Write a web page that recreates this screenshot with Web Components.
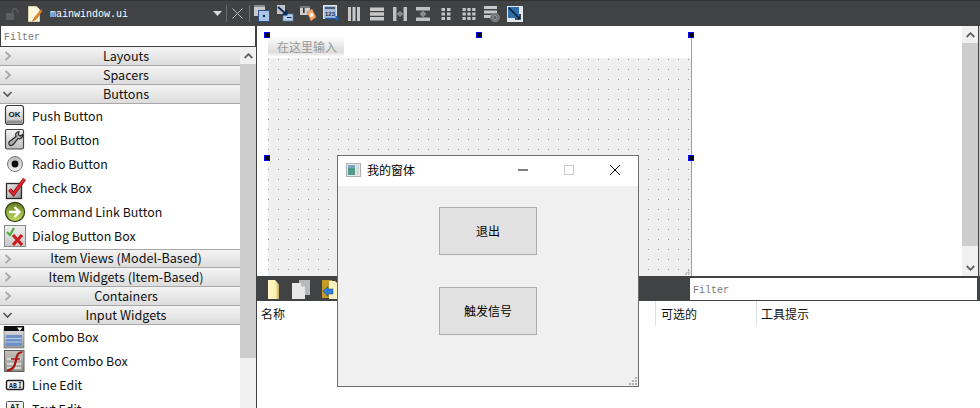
<!DOCTYPE html>
<html>
<head>
<meta charset="utf-8">
<title>mainwindow.ui</title>
<style>
    html, body { margin: 0; padding: 0; background: #fff; overflow: hidden; }
</style>
</head>
<body>
<ds-shell>
    <ds-toolbar slot="top">
        <ds-icon name="lock" style="--w:12px;margin:0 10px 0 6px"></ds-icon>
        <ds-icon name="file" style="--w:14px"></ds-icon>
        <span style="font:10px 'Liberation Mono',monospace;color:#fff;margin:1px 0 0 8px;width:163px">mainwindow.ui</span>
        <ds-icon name="caret" style="--w:9px;margin-right:4px"></ds-icon>
        <ds-sep></ds-sep>
        <ds-icon name="close" style="--w:11px;margin:0 6px 0 5px"></ds-icon>
        <ds-sep></ds-sep>
        <ds-icon name="widgetEdit" class="t" style="margin-left:4px"></ds-icon>
        <ds-icon name="signalEdit" class="t"></ds-icon>
        <ds-icon name="buddyEdit" class="t"></ds-icon>
        <ds-icon name="tabEdit" class="t"></ds-icon>
        <ds-icon name="hlayout" class="t"></ds-icon>
        <ds-icon name="vlayout" class="t"></ds-icon>
        <ds-icon name="hsplit" class="t"></ds-icon>
        <ds-icon name="vsplit" class="t"></ds-icon>
        <ds-icon name="flayout" class="t"></ds-icon>
        <ds-icon name="glayout" class="t"></ds-icon>
        <ds-icon name="breakLayout" class="t"></ds-icon>
        <ds-icon name="adjustSize" class="t"></ds-icon>
    </ds-toolbar>

    <ds-widgetbox slot="left">
        <ds-cat>Layouts</ds-cat>
        <ds-cat>Spacers</ds-cat>
        <ds-cat open>Buttons</ds-cat>
        <ds-item icon="pushBtn">Push Button</ds-item>
        <ds-item icon="toolBtn">Tool Button</ds-item>
        <ds-item icon="radio">Radio Button</ds-item>
        <ds-item icon="check">Check Box</ds-item>
        <ds-item icon="cmdLink">Command Link Button</ds-item>
        <ds-item icon="dlgBox">Dialog Button Box</ds-item>
        <ds-cat lined>Item Views (Model-Based)</ds-cat>
        <ds-cat>Item Widgets (Item-Based)</ds-cat>
        <ds-cat>Containers</ds-cat>
        <ds-cat open>Input Widgets</ds-cat>
        <ds-item icon="combo">Combo Box</ds-item>
        <ds-item icon="fontCombo">Font Combo Box</ds-item>
        <ds-item icon="lineEdit">Line Edit</ds-item>
        <ds-item icon="textEdit">Text Edit</ds-item>
    </ds-widgetbox>

    <ds-canvas slot="canvas"></ds-canvas>
    <ds-actions slot="bottom"></ds-actions>
</ds-shell>
<ds-window title="我的窗体">
    <ds-button>退出</ds-button>
    <ds-button>触发信号</ds-button>
</ds-window>

<script>
const ICONS = {
    lock: `<svg viewBox="0 0 12 14"><path d="M6.500 6V3.800a2.600 2.600 0 0 1 5 0V6" fill="none" stroke="#5a5c5e" stroke-width="1.500"/><rect x="0" y="6" width="8" height="7" fill="#5c5e60"/></svg>`,
    file: `<svg viewBox="0 0 14 16"><path d="M.5.500h8l3 3v12H.5z" fill="#fbf6dc" stroke="#d8d2b0"/><path d="M13.500 3 6.500 11.500 4.500 15l3.500-1.500 6-8z" fill="#e08a2c" stroke="#a85a12" stroke-width=".5"/></svg>`,
    caret: `<svg viewBox="0 0 9 5"><path d="M0 0h9L4.500 5z" fill="#d8d8d8"/></svg>`,
    close: `<svg viewBox="0 0 11 11"><path d="M.5.500l10 10M10.500.500l-10 10" stroke="#b8b8b8" stroke-width="1" fill="none"/></svg>`,
    widgetEdit: `<svg viewBox="0 0 16 17"><rect x="0" y="0" width="11" height="11" fill="#c9c9c9"/><rect x="0" y="0" width="11" height="2" fill="#8a8a8a"/><rect x="4.500" y="5.500" width="11" height="11" fill="#a9c6e8" stroke="#2a4f8a"/><rect x="9" y="10" width="2" height="2" fill="#123"/></svg>`,
    signalEdit: `<svg viewBox="0 0 16 17"><rect x="0" y="0" width="8" height="9" fill="#c4c4c4"/><rect x="6" y="9" width="10" height="7" fill="#b6cde8" stroke="#5a7fae" stroke-width=".7"/><path d="M1 2l8 7M9.500 5v4.500H5.500" stroke="#0b2a5a" stroke-width="1.800" fill="none"/><path d="M10 12.500h4.500" stroke="#123" stroke-width="1"/></svg>`,
    buddyEdit: `<svg viewBox="0 0 16 17"><rect x="0" y="1" width="10" height="9" fill="#cfcfcf"/><rect x="0" y="1" width="10" height="2" fill="#777"/><rect x="3" y="3" width="1.600" height="5" fill="#333"/><path d="M7 7l5-3 4 8-5 4z" fill="#f4a868" stroke="#d8703a" stroke-width=".6"/><circle cx="11.500" cy="10" r="2" fill="#fff3e0"/></svg>`,
    tabEdit: `<svg viewBox="0 0 16 17"><rect x=".5" y=".5" width="13" height="13" fill="#a8bfdc" stroke="#dfe6ee"/><rect x="2" y="2" width="10" height="2" fill="#4a5a78"/><text x="2" y="10.500" font-family="Liberation Sans" font-size="6" font-weight="700" fill="#17325e">123</text><path d="M2 13.500h13M12.500 11l3 2.500-3 2.500" stroke="#1c5fb0" stroke-width="1.300" fill="none"/></svg>`,
    hlayout: `<svg viewBox="0 0 16 16"><g fill="#c8c8c8"><rect x="2" y="1" width="3" height="14"/><rect x="6.500" y="1" width="3" height="14"/><rect x="11" y="1" width="3" height="14"/></g></svg>`,
    vlayout: `<svg viewBox="0 0 16 16"><g fill="#c8c8c8"><rect x="1" y="1.500" width="14" height="3.500"/><rect x="1" y="6.250" width="14" height="3.500"/><rect x="1" y="11" width="14" height="3.500"/></g></svg>`,
    hsplit: `<svg viewBox="0 0 16 16"><g fill="#c0c0c0"><rect x="1" y="1" width="3.500" height="14"/><rect x="11.500" y="1" width="3.500" height="14"/></g><path d="M4.500 8 8 5l3.500 3L8 11z" fill="#8a8a8a"/></svg>`,
    vsplit: `<svg viewBox="0 0 16 16"><g fill="#c0c0c0"><rect x="1" y="1" width="14" height="3.500"/><rect x="1" y="11.500" width="14" height="3.500"/></g><path d="M8 4.500l3.500 3.500L8 11.500 4.500 8z" fill="#8a8a8a"/></svg>`,
    flayout: `<svg viewBox="0 0 16 16"><g fill="#c4c4c4"><rect x="3.500" y="2" width="3.500" height="3"/><rect x="9" y="2" width="3.500" height="3"/><rect x="3.500" y="6.500" width="3.500" height="3"/><rect x="9" y="6.500" width="3.500" height="3"/><rect x="3.500" y="11" width="3.500" height="3"/><rect x="9" y="11" width="3.500" height="3"/></g></svg>`,
    glayout: `<svg viewBox="0 0 16 16"><g fill="#c4c4c4"><rect x="1.500" y="2" width="3.300" height="3"/><rect x="6.300" y="2" width="3.300" height="3"/><rect x="11.200" y="2" width="3.300" height="3"/><rect x="1.500" y="6.500" width="3.300" height="3"/><rect x="6.300" y="6.500" width="3.300" height="3"/><rect x="11.200" y="6.500" width="3.300" height="3"/><rect x="1.500" y="11" width="3.300" height="3"/><rect x="6.300" y="11" width="3.300" height="3"/><rect x="11.200" y="11" width="3.300" height="3"/></g></svg>`,
    breakLayout: `<svg viewBox="0 0 16 16"><g fill="#c8c8c8"><rect x="0" y="0" width="13" height="3"/><rect x="0" y="4.500" width="13" height="3"/><rect x="0" y="9" width="8" height="3"/></g><circle cx="11" cy="11.500" r="4.300" fill="#6e6e6e" stroke="#8a8a8a"/><circle cx="11" cy="11.500" r="2" fill="#5a5a5a" stroke="#999"/></svg>`,
    adjustSize: `<svg viewBox="0 0 16 16"><rect x="0" y="0" width="16" height="16" fill="#dfe6ee"/><rect x="1" y="1" width="11" height="11" fill="#2e6ea8"/><path d="M2 2l11 11M13 8v5H8" stroke="#0c1c30" stroke-width="1.600" fill="none"/></svg>`,

    pushBtn: `<svg viewBox="0 0 22 22"><defs><linearGradient id="g" x2="0" y2="1"><stop offset="0" stop-color="#fff"/><stop offset="1" stop-color="#bbb"/></linearGradient></defs><rect x="1.500" y=".5" width="18" height="19" rx="2.500" fill="url(#g)" stroke="#3c3c3c" stroke-width="1.200"/><rect x="3" y="15.500" width="15" height="3" fill="#8e8e8e"/><text x="10.500" y="11.500" text-anchor="middle" font-family="Liberation Sans" font-size="8" font-weight="700" fill="#111">OK</text></svg>`,
    toolBtn: `<svg viewBox="0 0 22 22"><defs><linearGradient id="g" x2="0" y2="1"><stop offset="0" stop-color="#f4f4f4"/><stop offset="1" stop-color="#bdbdbd"/></linearGradient></defs><rect x="1.500" y=".5" width="18" height="19.500" rx="1.500" fill="url(#g)" stroke="#444" stroke-width="1.200"/><path d="M15 2.500c-3 .5-4 2.500-3 5l-6.500 5c-1.500 1.500-.5 4.500 2 4 1.500-.5 2-1.500 3-2.500l3.500-4.500c2.500 1 5-1 4.500-4l-2 1.500-2-1z" fill="#b0b0b0" stroke="#2a2a2a" stroke-width="1.200"/></svg>`,
    radio: `<svg viewBox="0 0 22 22"><defs><linearGradient id="g" x2="0" y2="1"><stop offset="0" stop-color="#b8b8b8"/><stop offset="1" stop-color="#f4f4f4"/></linearGradient></defs><circle cx="11" cy="11" r="7.500" fill="url(#g)" stroke="#7a7a7a"/><circle cx="11" cy="11" r="3.400" fill="#0c0c0c"/></svg>`,
    check: `<svg viewBox="0 0 22 22"><defs><linearGradient id="g" x1="0" y1="0" x2="1" y2="1"><stop offset="0" stop-color="#f0f0f0"/><stop offset="1" stop-color="#8e8e8e"/></linearGradient></defs><rect x="2.500" y="6.500" width="15" height="15" fill="url(#g)" stroke="#2a2a2a" stroke-width="1.300"/><path d="M5.500 12.500l4 4.500 11-15" fill="none" stroke="#8e1016" stroke-width="3.800"/><path d="M5.500 12.500l4 4.500 11-15" fill="none" stroke="#e0262e" stroke-width="2.200"/></svg>`,
    cmdLink: `<svg viewBox="0 0 22 22"><defs><linearGradient id="g" x2="0" y2="1"><stop offset="0" stop-color="#5f7f1c"/><stop offset="1" stop-color="#c6dc66"/></linearGradient></defs><circle cx="11" cy="11" r="9.600" fill="url(#g)" stroke="#333d18" stroke-width="1.200"/><path d="M5 11h10M10.500 6l5 5-5 5" fill="none" stroke="#fff" stroke-width="2.300"/></svg>`,
    dlgBox: `<svg viewBox="0 0 22 22"><defs><linearGradient id="g" x2="0" y2="1"><stop offset="0" stop-color="#efefef"/><stop offset="1" stop-color="#c8c8c8"/></linearGradient></defs><rect x=".5" y=".5" width="21" height="21" fill="url(#g)" stroke="#8a8a8a"/><path d="M3 7l3 3 4-7" fill="none" stroke="#4caf3a" stroke-width="2.200"/><path d="M9 10l9 10M18 10l-9 10" stroke="#c81e1e" stroke-width="3.200"/></svg>`,
    combo: `<svg viewBox="0 0 22 22"><defs><linearGradient id="g" x2="0" y2="1"><stop offset="0" stop-color="#e4e4e4"/><stop offset="1" stop-color="#9a9a9a"/></linearGradient></defs><rect x="0" y="1" width="20" height="21" fill="url(#g)" stroke="#666" stroke-width=".6"/><rect x="0" y="0" width="20" height="5" fill="#0e0e0e"/><path d="M13 1.500h5.500L15.750 5z" fill="#fff"/><rect x="2" y="9" width="16" height="11" fill="#6d92c8"/><path d="M2 12.500h16M2 16h16" stroke="#c8d4e4" stroke-width=".9"/></svg>`,
    fontCombo: `<svg viewBox="0 0 22 22"><defs><linearGradient id="g" x2="0" y2="1"><stop offset="0" stop-color="#c4c4bc"/><stop offset="1" stop-color="#8e8e88"/></linearGradient></defs><rect x=".5" y=".5" width="19.500" height="21" fill="url(#g)" stroke="#5e5e5e"/><path d="M3 9h14M3 14h14M3 18h14" stroke="#d8d8d2" stroke-width="2.500"/><path d="M18.500 2c-4.500 0-5.500 3-6.500 8S10 20 3 20.500" fill="none" stroke="#a81414" stroke-width="2.200"/><path d="M7 9h9" stroke="#a81414" stroke-width="1.500"/></svg>`,
    lineEdit: `<svg viewBox="0 0 22 22"><rect x="2.500" y="6.500" width="17" height="9" rx="1.500" fill="#f4f4f4" stroke="#1c1c1c" stroke-width="1.400"/><text x="9" y="13.800" text-anchor="middle" font-family="Liberation Mono" font-size="6.500" font-weight="700" fill="#111">AB</text><path d="M16 8.500v5M14.700 8.500h2.600M14.700 13.500h2.600" stroke="#111" stroke-width=".8"/></svg>`,
    textEdit: `<svg viewBox="0 0 22 22"><rect x="2.500" y="3.500" width="17" height="18" rx="1" fill="#f4f4f4" stroke="#555"/><text x="11" y="11" text-anchor="middle" font-family="Liberation Mono" font-size="8" font-weight="700" fill="#222">AI</text></svg>`,

    newForm: `<svg viewBox="0 0 12 19"><defs><linearGradient id="g" x1="0" x2="1"><stop offset="0" stop-color="#fff8c8"/><stop offset=".7" stop-color="#fdf0b0"/><stop offset="1" stop-color="#bca860"/></linearGradient></defs><path d="M1 0h7l4 4.500V19H1z" fill="url(#g)"/></svg>`,
    copyDoc: `<svg viewBox="0 0 18 19"><path d="M7 0h11v15H7z" fill="#b8b8b8"/><path d="M0 3h9l4 3.500V19H0z" fill="#e8e8e8"/><path d="M9 3l4 3.500H9z" fill="#bbb"/></svg>`,
    openDoc: `<svg viewBox="0 0 16 19"><path d="M0 0h10v18H0z" fill="#c49a28"/><path d="M7 1h6l3 3v15H7z" fill="#fbf0c0"/><path d="M1 11l5-4.500V9h5v5H6v2.500z" fill="#2f7fd8" stroke="#134a8c" stroke-width=".5"/></svg>`
};

class DsIcon extends HTMLElement {
    constructor() {
        super();
        this.attachShadow({ mode: "open" });
    }
    connectedCallback() {
        this.shadowRoot.innerHTML = `
            <style>
                :host { display: block; flex: none; width: var(--w, 16px); }
                :host(.t) { width: 16px; margin-right: 7px; }
                svg { display: block; width: 100%; height: auto; overflow: visible; }
            </style>
            ${ICONS[this.getAttribute("name")] || ""}
        `;
    }
}

class DsSep extends HTMLElement {
    constructor() {
        super();
        this.attachShadow({ mode: "open" }).innerHTML = `
            <style>:host { display: block; flex: none; width: 1px; height: 17px; background: #6a6c6e; }</style>
        `;
    }
}

class DsShell extends HTMLElement {
    constructor() {
        super();
        this.attachShadow({ mode: "open" }).innerHTML = `
            <style>
                :host {
                    display: grid;
                    grid-template-columns: 256px 724px;
                    grid-template-rows: 26px 382px;
                    width: 980px;
                    height: 408px;
                    overflow: hidden;
                    background: #404244;
                }
                .top { grid-column: 1 / 3; }
                .left { min-height: 0; overflow: hidden; }
                .right {
                    display: grid;
                    grid-template-rows: 250px 132px;
                    padding-left: 1px;
                    min-height: 0;
                    overflow: hidden;
                }
            </style>
            <div class="top"><slot name="top"></slot></div>
            <div class="left"><slot name="left"></slot></div>
            <div class="right"><slot name="canvas"></slot><slot name="bottom"></slot></div>
        `;
    }
}

class DsToolbar extends HTMLElement {
    constructor() {
        super();
        this.attachShadow({ mode: "open" }).innerHTML = `
            <style>
                :host {
                    display: flex;
                    align-items: center;
                    height: 26px;
                    box-sizing: border-box;
                    border-top: 1px solid #333;
                    background: #404244;
                }
            </style>
            <slot></slot>
        `;
    }
}

class DsFilter extends HTMLElement {
    constructor() {
        super();
        this.attachShadow({ mode: "open" }).innerHTML = `
            <style>
                :host {
                    display: block;
                    box-sizing: border-box;
                    height: var(--h, 20px);
                    padding: 2px 0 0 3px;
                    overflow: hidden;
                    background: #fff;
                    color: #777;
                    font: 10px/calc(var(--h, 20px) - 1px) "Liberation Mono", monospace;
                }
            </style>
            Filter
        `;
    }
}

class DsScrollbar extends HTMLElement {
    constructor() {
        super();
        this.attachShadow({ mode: "open" }).innerHTML = `
            <style>
                :host {
                    display: flex;
                    flex-direction: column;
                    flex: none;
                    width: 16px;
                    background: #f0f0f0;
                }
                .arrow { height: 17px; flex: none; display: flex; align-items: center; justify-content: center; }
                .thumb { flex: none; height: var(--thumb, 200px); background: #cdcdcd; }
                .fill { flex: 1; }
                svg { width: 9px; height: 6px; display: block; }
            </style>
            <div class="arrow"><svg viewBox="0 0 9 6"><path d="M.7 5 4.500 1.200 8.300 5" fill="none" stroke="#606060" stroke-width="1.800"/></svg></div>
            <div class="thumb"></div>
            <div class="fill"></div>
            <div class="arrow"><svg viewBox="0 0 9 6"><path d="M.7 1 4.500 4.800 8.300 1" fill="none" stroke="#606060" stroke-width="1.800"/></svg></div>
        `;
    }
}

class DsWidgetbox extends HTMLElement {
    constructor() {
        super();
        this.attachShadow({ mode: "open" }).innerHTML = `
            <style>
                :host { display: flex; flex-direction: column; height: 382px; }
                ds-filter { flex: none; border-left: 1px solid #404244; border-right: 1px solid #404244; }
                .rule { flex: none; height: 1px; background: #404244; }
                .body { flex: none; height: 420px; display: flex; background: #fff; }
                .list { flex: 1; min-width: 0; overflow: hidden; }
            </style>
            <ds-filter></ds-filter>
            <div class="rule"></div>
            <div class="body">
                <div class="list"><slot></slot></div>
                <ds-scrollbar style="--thumb:294px"></ds-scrollbar>
            </div>
        `;
    }
}

class DsCat extends HTMLElement {
    constructor() {
        super();
        const open = this.hasAttribute("open");
        this.attachShadow({ mode: "open" }).innerHTML = `
            <style>
                :host {
                    display: flex;
                    align-items: center;
                    height: 19px;
                    box-sizing: border-box;
                    border-bottom: 1px solid #a8a8a8;
                    background: linear-gradient(#f4f4f4, #dcdcdc);
                    color: #111;
                    font: 12.6px/18px "Noto Sans CJK SC", sans-serif;
                }
                :host([lined]) { margin-top: 1px; border-top: 1px solid #a8a8a8; }
                svg { width: 16px; height: 18px; flex: none; }
                .t { flex: 1; text-align: center; padding-right: 4px; margin-top: -1px; }
            </style>
            ${open
                ? `<svg viewBox="0 0 16 18"><path d="M3.500 7 7.500 11 11.500 7" fill="none" stroke="#555" stroke-width="1.600"/></svg>`
                : `<svg viewBox="0 0 16 18"><path d="M5.500 5l4.500 4-4.500 4" fill="none" stroke="#aaa" stroke-width="1.800"/></svg>`}
            <span class="t"><slot></slot></span>
        `;
    }
}

class DsItem extends HTMLElement {
    constructor() {
        super();
        this.attachShadow({ mode: "open" }).innerHTML = `
            <style>
                :host {
                    display: flex;
                    align-items: center;
                    height: 24px;
                    padding-left: 4px;
                    color: #111;
                    font: 12.4px "Noto Sans CJK SC", sans-serif;
                }
                ds-icon { --w: 22px; margin-right: 6px; }
                .t { margin-top: 0; }
            </style>
            <ds-icon name="${this.getAttribute("icon")}"></ds-icon>
            <span class="t"><slot></slot></span>
        `;
    }
}

class DsForm extends HTMLElement {
    constructor() {
        super();
        this.attachShadow({ mode: "open" }).innerHTML = `
            <style>
                :host { display: block; position: absolute; left: 10px; top: 9px; width: 424px; height: 241px; }
                .paper {
                    position: absolute; left: 1px; right: -1px; top: 2px; bottom: 0;
                    border-right: 1px solid #a0a0a0;
                    display: flex; flex-direction: column;
                }
                .menu { height: 19px; flex: none; display: flex; }
                .menu span {
                    width: 76px; box-sizing: border-box; padding-left: 9px;
                    background: linear-gradient(#fdfdfd 0, #dcdcdc 80%, #f8f8f8 100%);
                    color: #999;
                    font: 12px/19px "Noto Sans CJK SC", sans-serif;
                }
                .grid {
                    flex: 1;
                    margin-top: 2px;
                    background-color: #efefef;
                    background-image: conic-gradient(from 270deg at 1px 1px, #999 90deg, transparent 0);
                    background-size: 10px 10px;
                    background-position: 0 1px;
                }
                .h { position: absolute; width: 6px; height: 6px; background: #000; box-shadow: inset 0 0 0 1px #0000ff; }
                .grip { position: absolute; right: 1px; bottom: 1px; width: 5px; height: 5px; }
            </style>
            <div class="paper">
                <div class="menu"><span>在这里输入</span></div>
                <div class="grid"></div>
                <svg class="grip" viewBox="0 0 5 5"><g fill="#b4b4b4"><rect x="3" y="0" width="1.500" height="1.500"/><rect x="1" y="2" width="1.500" height="1.500"/><rect x="3" y="2" width="1.500" height="1.500"/><rect x="0" y="3.500" width="1.500" height="1.500"/><rect x="3" y="3.500" width="1.500" height="1.500"/></g></svg>
            </div>
            <div class="h" style="left:-3px;top:-3px"></div>
            <div class="h" style="left:209px;top:-3px"></div>
            <div class="h" style="left:421px;top:-3px"></div>
            <div class="h" style="left:-3px;top:120px"></div>
            <div class="h" style="left:421px;top:120px"></div>
        `;
    }
}

class DsCanvas extends HTMLElement {
    constructor() {
        super();
        this.attachShadow({ mode: "open" }).innerHTML = `
            <style>
                :host { display: flex; height: 250px; background: #fff; }
                .area { position: relative; flex: 1; min-width: 0; }
                ds-scrollbar { --thumb: 203px; }
                .edge { flex: none; width: 2px; background: linear-gradient(to right, #404244 1px, #c8c8c8 1px); }
            </style>
            <div class="area"><ds-form></ds-form></div>
            <ds-scrollbar></ds-scrollbar>
            <div class="edge"></div>
        `;
    }
}

class DsActions extends HTMLElement {
    constructor() {
        super();
        this.attachShadow({ mode: "open" }).innerHTML = `
            <style>
                :host { display: flex; flex-direction: column; height: 132px; background: #fff; }
                .bar { flex: none; height: 25px; background: #404244; display: flex; box-sizing: border-box; padding: 2px 3px 1px 0; }
                .tools { flex: 1; display: flex; align-items: center; padding-left: 10px; }
                ds-filter { flex: none; width: 287px; --h: 22px; }
                .head { flex: none; height: 25px; display: flex; background: #fff; color: #111; font: 12px/25px "Noto Sans CJK SC", sans-serif; }
                .head span { box-sizing: border-box; padding-left: 4px; }
            </style>
            <div class="bar">
                <div class="tools">
                    <ds-icon name="newForm" style="--w:12px;margin-right:13px"></ds-icon>
                    <ds-icon name="copyDoc" style="--w:18px;margin-right:12px"></ds-icon>
                    <ds-icon name="openDoc" style="--w:16px"></ds-icon>
                </div>
                <ds-filter></ds-filter>
            </div>
            <div class="head">
                <span style="width:398px">名称</span>
                <span style="width:101px;padding-left:5px;border-left:1px solid #e0e0e0">可选的</span>
                <span style="flex:1;border-left:1px solid #e0e0e0">工具提示</span>
            </div>
        `;
    }
}

class DsButton extends HTMLElement {
    constructor() {
        super();
        this.attachShadow({ mode: "open" }).innerHTML = `
            <style>
                :host {
                    display: flex;
                    align-items: center;
                    justify-content: center;
                    box-sizing: border-box;
                    width: 98px;
                    height: 48px;
                    padding-bottom: 2px;
                    border: 1px solid #adadad;
                    background: #e1e1e1;
                    color: #000;
                    font: 12px "Noto Sans CJK SC", sans-serif;
                }
            </style>
            <slot></slot>
        `;
    }
}

class DsWindow extends HTMLElement {
    constructor() {
        super();
        this.attachShadow({ mode: "open" }).innerHTML = `
            <style>
                :host {
                    position: absolute;
                    left: 337px;
                    top: 155px;
                    width: 302px;
                    height: 232px;
                    box-sizing: border-box;
                    border: 1px solid #6d6d6d;
                    display: flex;
                    flex-direction: column;
                    background: #f0f0f0;
                    font: 12px "Noto Sans CJK SC", sans-serif;
                }
                .title { flex: none; height: 30px; box-sizing: border-box; padding: 0 0 2px 8px; display: flex; align-items: center; background: #fff; color: #000; }
                .title svg.app { width: 15px; height: 14px; flex: none; margin-right: 6px; }
                .name { flex: 1; margin-top: -2px; }
                .wb { flex: none; width: 46px; display: flex; justify-content: center; }
                .wb svg { width: 10px; height: 10px; display: block; }
                .body { flex: 1; display: flex; flex-direction: column; align-items: center; gap: 32px; padding-top: 21px; position: relative; }
                .grip { position: absolute; right: 1px; bottom: 1px; width: 8px; height: 8px; }
            </style>
            <div class="title">
                <svg class="app" viewBox="0 0 15 14"><rect x=".5" y=".5" width="14" height="13" fill="#e8e8e8" stroke="#b0b0b0"/><rect x="2" y="2" width="7" height="10" fill="#4f9a8c"/><rect x="2" y="2" width="7" height="3" fill="#7aa5c0"/><rect x="10" y="2" width="3" height="10" fill="#d4dcd8"/></svg>
                <span class="name">${this.getAttribute("title")}</span>
                <span class="wb"><svg viewBox="0 0 10 10"><path d="M0 5h10" stroke="#000"/></svg></span>
                <span class="wb"><svg viewBox="0 0 10 10"><rect x=".5" y=".5" width="9" height="9" fill="none" stroke="#ccc"/></svg></span>
                <span class="wb"><svg viewBox="0 0 10 10"><path d="M0 0l10 10M10 0 0 10" stroke="#000" fill="none"/></svg></span>
            </div>
            <div class="body">
                <slot></slot>
                <svg class="grip" viewBox="0 0 8 8"><g fill="#b0b0b0"><rect x="6" y="0" width="2" height="2"/><rect x="3" y="3" width="2" height="2"/><rect x="6" y="3" width="2" height="2"/><rect x="0" y="6" width="2" height="2"/><rect x="3" y="6" width="2" height="2"/><rect x="6" y="6" width="2" height="2"/></g></svg>
            </div>
        `;
    }
}

customElements.define("ds-icon", DsIcon);
customElements.define("ds-sep", DsSep);
customElements.define("ds-shell", DsShell);
customElements.define("ds-toolbar", DsToolbar);
customElements.define("ds-filter", DsFilter);
customElements.define("ds-scrollbar", DsScrollbar);
customElements.define("ds-widgetbox", DsWidgetbox);
customElements.define("ds-cat", DsCat);
customElements.define("ds-item", DsItem);
customElements.define("ds-form", DsForm);
customElements.define("ds-canvas", DsCanvas);
customElements.define("ds-actions", DsActions);
customElements.define("ds-button", DsButton);
customElements.define("ds-window", DsWindow);
</script>
</body>
</html>
